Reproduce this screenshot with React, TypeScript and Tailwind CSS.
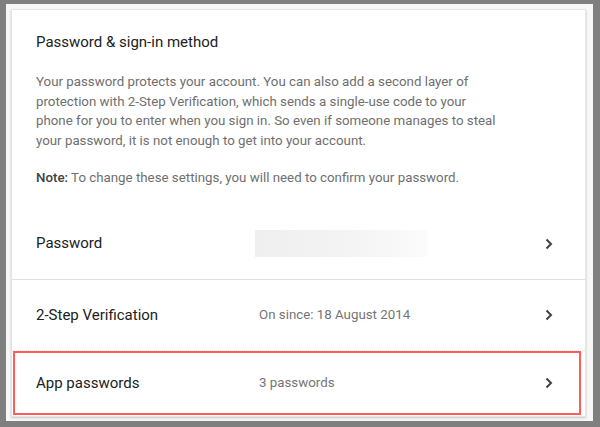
const Chevron = () => (
  <svg width="8" height="12" viewBox="0 0 8 12" className="shrink-0">
    <path d="M1.5 1.5 L6 6 L1.5 10.5" fill="none" stroke="#424242" strokeWidth="2" />
  </svg>
);

interface RowProps {
  label: string;
  value?: string;
  masked?: boolean;
  className?: string;
}

const Row: React.FC<RowProps> = ({ label, value, masked, className = "pl-[24px] pr-[32px]" }) => (
  <div className={`flex items-center h-full ${className}`}>
    <div className="w-[223px] text-[15px] text-[#212121]">{label}</div>
    <div className="flex-1 flex items-center">
      {masked ? (
        <div className="ml-[-4px] w-[172px] h-[27px] bg-gradient-to-r from-[#efefef] via-[#f3f3f3] to-[#fbfbfb]" />
      ) : (
        <span className="text-[13.3px] text-[#757575]">{value}</span>
      )}
    </div>
    <Chevron />
  </div>
);

export default function App() {
  return (
    <div
      className="w-[600px] h-[427px] bg-[#7f7f7f] pl-[6px] pt-[4px] pr-[7px] pb-[6px]"
      style={{ fontFamily: "Roboto, 'Liberation Sans', sans-serif" }}
    >
      <div className="h-full bg-[#f7f7f7] pl-[5px] pt-[5px] pr-[7px] pb-[4px]">
        <div className="h-full bg-white border border-[#e4e4e4] shadow-[0_1px_2px_rgba(0,0,0,0.2)] flex flex-col">
          {/* Header */}
          <div className="pl-[24px] pt-[22px]">
            <h2 className="text-[15px] leading-[20px] text-[#212121]">Password &amp; sign-in method</h2>
            <p className="mt-[20px] text-[13.3px] leading-[19.5px] text-[#6f6f6f]">
              Your password protects your account. You can also add a second layer of
              <br />
              protection with 2-Step Verification, which sends a single-use code to your
              <br />
              phone for you to enter when you sign in. So even if someone manages to steal
              <br />
              your password, it is not enough to get into your account.
            </p>
            <p className="mt-[18px] text-[13.3px] leading-[20px] text-[#6f6f6f]">
              <span className="font-medium text-[#424242]">Note:</span> To change these settings, you will need to confirm your password.
            </p>
          </div>

          {/* Rows */}
          <div className="mt-[20px] h-[72px] border-b border-[#e0e0e0]">
            <Row label="Password" masked />
          </div>
          <div className="h-[71px] border-b border-dotted border-[#e8e8e8]">
            <Row label="2-Step Verification" value="On since: 18 August 2014" />
          </div>
          <div className="ml-[1px] mr-[4px] h-[64px] border-2 border-[#ff5c5c]">
            <Row label="App passwords" value="3 passwords" className="pl-[21px] pr-[26px]" />
          </div>
        </div>
      </div>
    </div>
  );
}
